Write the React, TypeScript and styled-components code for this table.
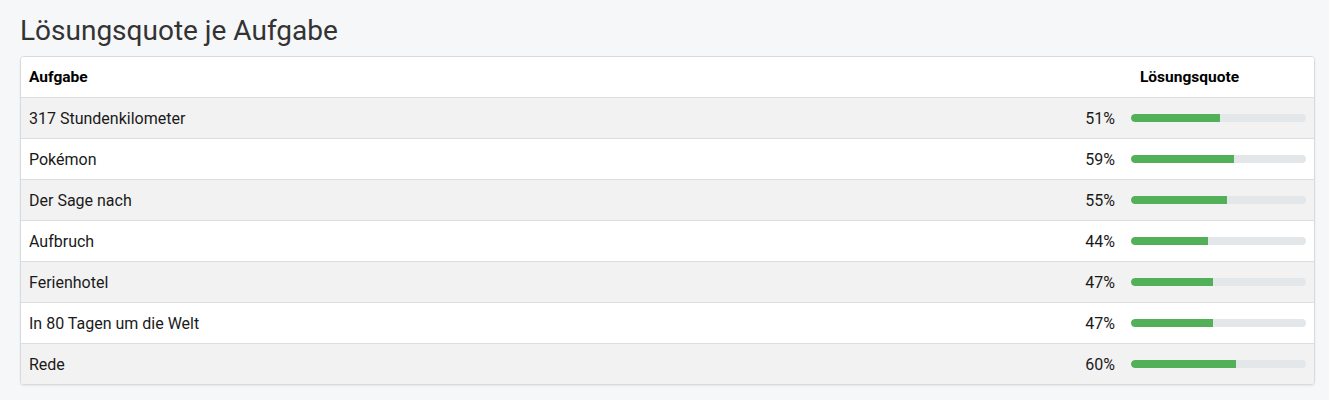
import React from "react";
import styled, { createGlobalStyle } from "styled-components";

const GlobalStyle = createGlobalStyle`
  body {
    margin: 0;
    background-color: #f6f7f9;
    font-family: Roboto, "Liberation Sans", sans-serif;
    -webkit-font-smoothing: antialiased;
  }
`;

const Page = styled.div`
  padding: 14px 14px 14px 20px;
`;

const Title = styled.h2`
  margin: 0 0 8px;
  font-size: 28px;
  font-weight: 400;
  line-height: 34px;
  color: #333;
`;

const Card = styled.div`
  background: #fff;
  border: 1px solid #d8dadd;
  border-radius: 4px;
  overflow: hidden;
  box-shadow: 0 1px 2px rgba(0, 0, 0, 0.08);
`;

const Row = styled.div<{ $striped?: boolean; $header?: boolean }>`
  display: grid;
  grid-template-columns: 1fr 58px 191px;
  align-items: center;
  height: 40px;
  background: ${({ $striped }) => ($striped ? "#f2f2f2" : "#fff")};
  border-top: ${({ $header }) => ($header ? "none" : "1px solid #dcdee0")};
  font-size: 16px;
  color: #1a1a1a;
`;

const HeadCell = styled.div<{ $center?: boolean }>`
  padding: 0 8px;
  font-weight: 700;
  font-size: 15.5px;
  color: #000;
  text-align: ${({ $center }) => ($center ? "center" : "left")};
  grid-column: ${({ $center }) => ($center ? "2 / 4" : "auto")};
`;

const NameCell = styled.div`
  padding: 0 8px;
`;

const PctCell = styled.div`
  padding: 0 8px;
  text-align: right;
`;

const BarCell = styled.div`
  padding: 0 8px;
`;

const Track = styled.div`
  height: 8px;
  border-radius: 4px;
  background: #e4e7ea;
  overflow: hidden;
`;

const Fill = styled.div`
  height: 100%;
  background: #52b058;
  border-radius: 4px 0 0 4px;
`;

const rows = [
  { name: "317 Stundenkilometer", pct: 51 },
  { name: "Pokémon", pct: 59 },
  { name: "Der Sage nach", pct: 55 },
  { name: "Aufbruch", pct: 44 },
  { name: "Ferienhotel", pct: 47 },
  { name: "In 80 Tagen um die Welt", pct: 47 },
  { name: "Rede", pct: 60 },
];

const App = (): JSX.Element => {
  return (
    <>
      <GlobalStyle />
      <Page>
        <Title>Lösungsquote je Aufgabe</Title>
        <Card>
          <Row $header>
            <HeadCell>Aufgabe</HeadCell>
            <HeadCell $center>Lösungsquote</HeadCell>
          </Row>
          {rows.map((r, i) => (
            <Row key={r.name} $striped={i % 2 === 0}>
              <NameCell>{r.name}</NameCell>
              <PctCell>{r.pct}%</PctCell>
              <BarCell>
                <Track>
                  <Fill style={{ width: `${r.pct}%` }} />
                </Track>
              </BarCell>
            </Row>
          ))}
        </Card>
      </Page>
    </>
  );
};

export default App;
